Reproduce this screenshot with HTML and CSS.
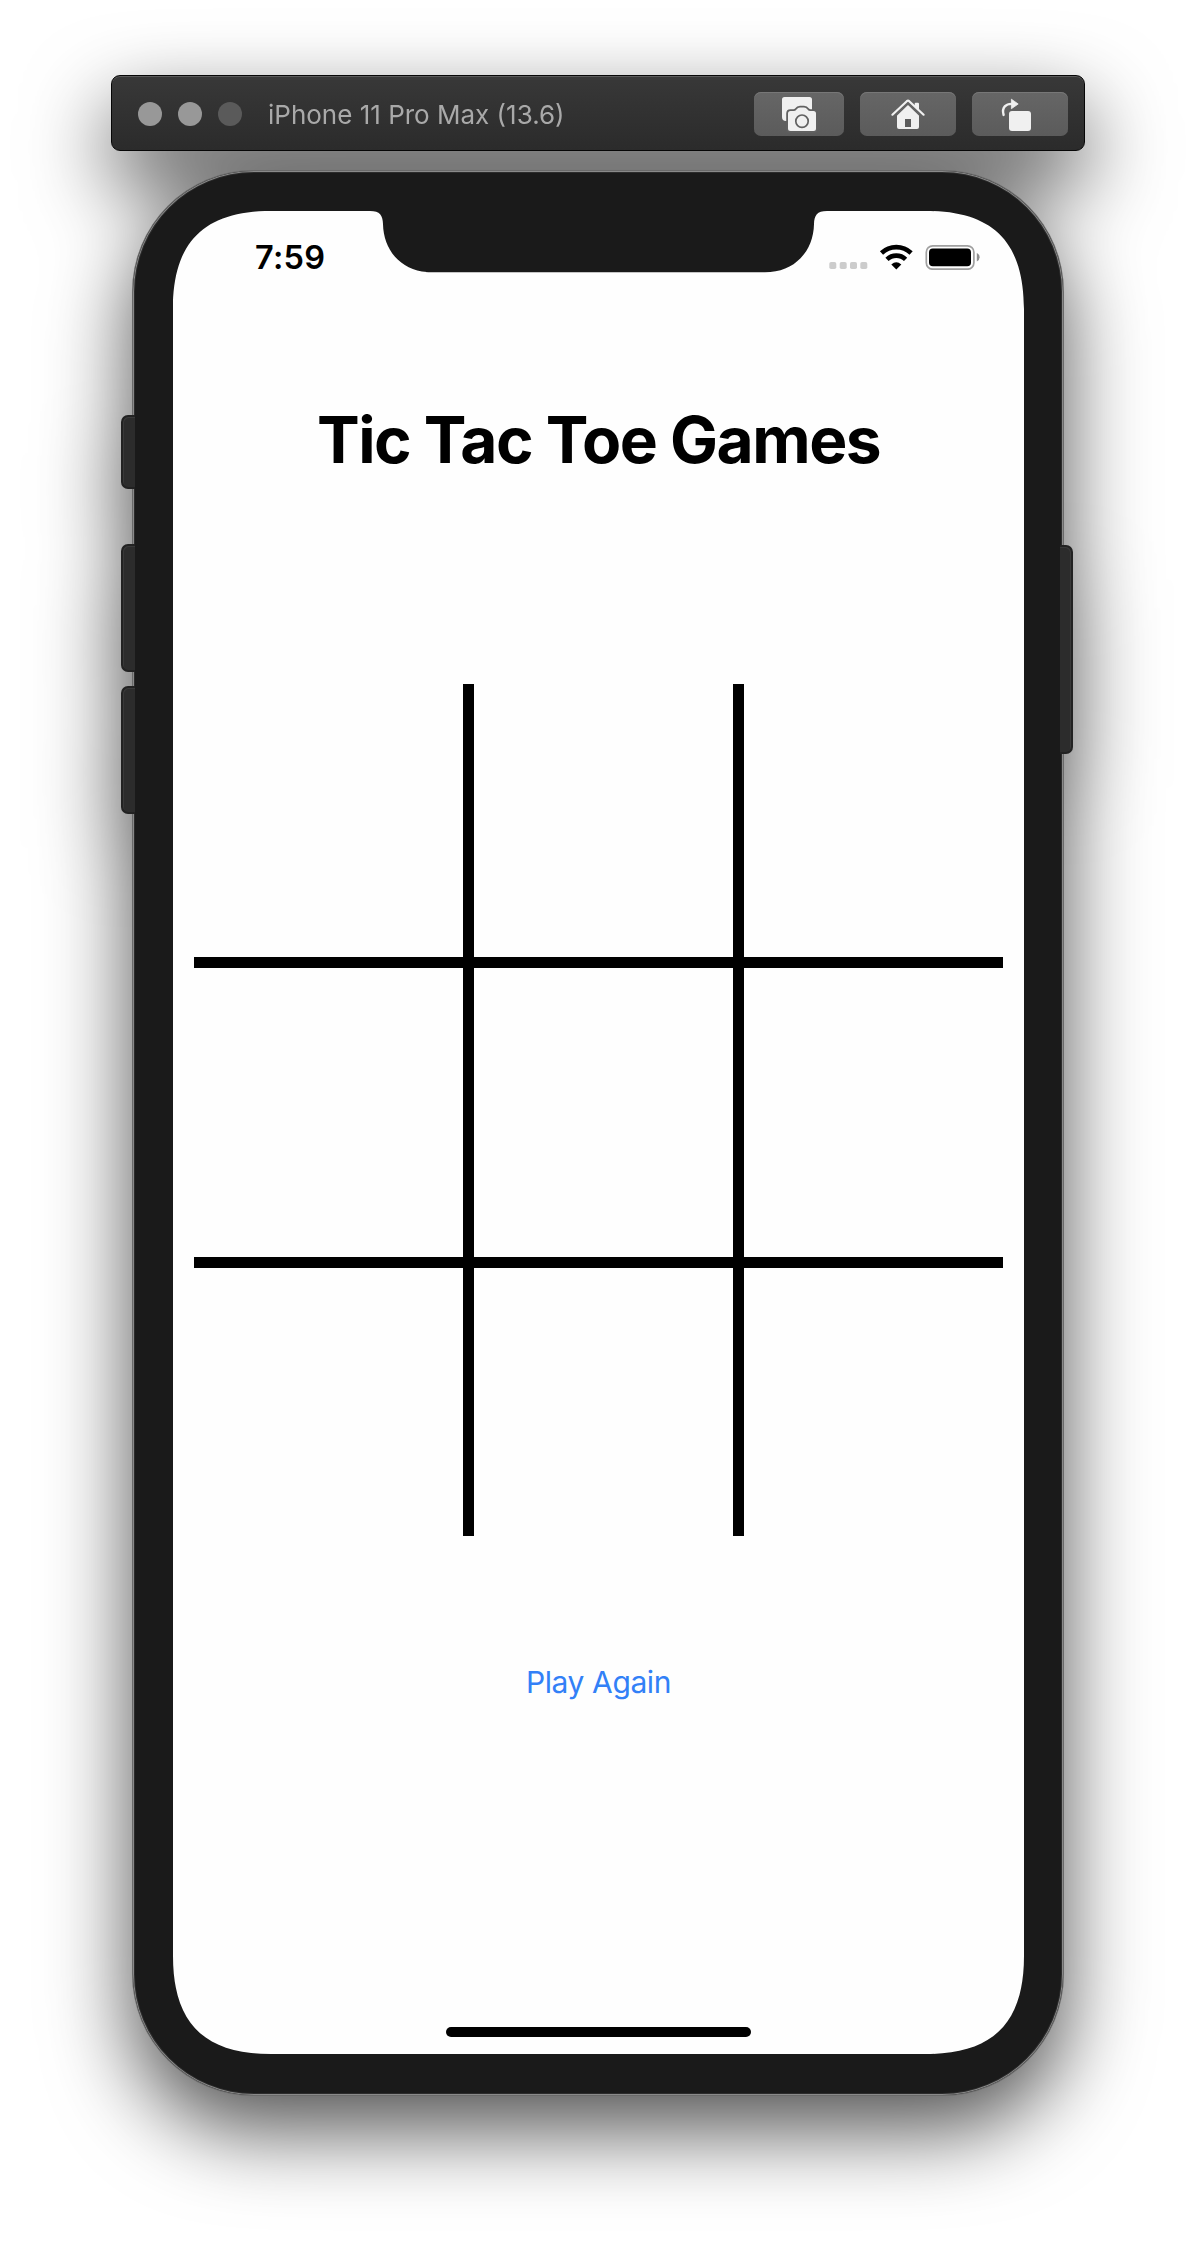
FILE: index.html
```html
<!DOCTYPE html>
<html lang="en">
<head>
<meta charset="utf-8">
<title>Tic Tac Toe Games</title>
<link rel="stylesheet" href="styles.css">
</head>
<body>
<div class="simulator">
  <header class="titlebar">
    <div class="lights"><i class="light"></i><i class="light"></i><i class="light light-off"></i></div>
    <span class="device-name">iPhone 11 Pro Max (13.6)</span>
    <div class="tools">
      <button class="tool tool-camera" aria-label="Screenshot">
        <svg width="90" height="44" viewBox="754 92 90 44">
          <path fill="#f0f0f0" d="M784.500 97H809.500Q812 97 812 99.500V113H790V121H786Q782 121 782 117V99.500Q782 97 784.500 97Z"/>
          <path fill="#f0f0f0" stroke="#616161" stroke-width="3.600" paint-order="stroke" d="M790.500 111H793.500Q795.500 111 796.500 109.500Q797.800 107.500 800 107.500H804Q806.200 107.500 807.500 109.500Q808.500 111 810.500 111H813.500Q816 111 816 113.500V128.500Q816 131 813.500 131H790.500Q788 131 788 128.500V113.500Q788 111 790.500 111Z"/>
          <circle cx="802" cy="121.200" r="6.200" fill="none" stroke="#616161" stroke-width="1.700"/>
        </svg>
      </button>
      <button class="tool" aria-label="Home">
        <svg width="96" height="44" viewBox="860 92 96 44">
          <path fill="#f0f0f0" d="M908 103.800L919 114.300V127Q919 129 917 129H899Q897 129 897 127V114.300Z"/>
          <path fill="#5c5c5c" d="M905 119h6v8h-6z"/>
          <path fill="#f0f0f0" d="M914.700 106v-2.200q0-1 1-1h2.300q1 0 1 1v6.200z"/>
          <path fill="none" stroke="#616161" stroke-width="1.500" d="M894 117.500L908 104L922 117.500"/>
          <path fill="none" stroke="#f0f0f0" stroke-width="2.200" stroke-linecap="round" stroke-linejoin="round" d="M892.400 114.700L906.800 101.200Q908 100.200 909.200 101.200L923.600 114.700"/>
        </svg>
      </button>
      <button class="tool" aria-label="Rotate">
        <svg width="96" height="44" viewBox="972 92 96 44">
          <rect x="1009" y="111" width="22" height="20" rx="3" fill="#f0f0f0"/>
          <path fill="none" stroke="#f0f0f0" stroke-width="2.400" stroke-linecap="round" d="M1003.600 114.900Q1002 109.500 1004.800 106.400Q1007 103.900 1011.500 103.900"/>
          <path fill="#f0f0f0" stroke="#f0f0f0" stroke-width=".8" stroke-linejoin="round" d="M1011.400 99.200L1018.200 104L1011.400 108.700Z"/>
        </svg>
      </button>
    </div>
  </header>

  <div class="phone">
    <i class="side-key key-mute"></i>
    <i class="side-key key-up"></i>
    <i class="side-key key-down"></i>
    <i class="side-key key-power"></i>
    <div class="body">
      <main class="screen">
        <div class="statusbar">
          <span class="clock">7:59</span>
          <svg class="status-icons" width="152" height="26" viewBox="829 244 152 26">
            <g fill="#ccc">
              <rect x="829.300" y="262" width="7" height="7" rx="1.800"/>
              <rect x="839.700" y="262" width="7" height="7" rx="1.800"/>
              <rect x="850" y="262" width="7" height="7" rx="1.800"/>
              <rect x="860.300" y="262" width="7" height="7" rx="1.800"/>
            </g>
            <g fill="none" stroke="#000" stroke-width="4.600">
              <path d="M881.500 253A21.500 21.500 0 0 1 911.100 253"/>
              <path d="M887 259.400A13.300 13.300 0 0 1 905.600 259.400"/>
            </g>
            <path d="M896.300 269.400L891.300 264.400Q896.300 260 901.300 264.400Z"/>
            <rect x="926.300" y="245.800" width="47.600" height="23.400" rx="6.500" fill="none" stroke="#a0a0a0" stroke-width="1.700"/>
            <rect x="929" y="248.600" width="42" height="17.600" rx="3.800"/>
            <path fill="#8f8f8f" d="M976.800 253Q979.600 254.200 979.600 257.300T976.800 261.600Z"/>
          </svg>
        </div>
        <h1 class="title">Tic Tac Toe Games</h1>
        <div class="board">
          <i></i><i></i><i></i>
          <i></i><i></i><i></i>
          <i></i><i></i><i></i>
        </div>
        <button class="again">Play Again</button>
        <div class="home-indicator"></div>
      </main>
    </div>
  </div>
</div>
</body>
</html>
```
FILE: styles.css
```css
* { box-sizing: border-box; }

body {
  margin: 0;
  width: 1196px;
  height: 2244px;
  overflow: hidden;
  background: #fff;
  font-family: Inter, "Liberation Sans", sans-serif;
}

button {
  border: 0;
  padding: 0;
  background: none;
  font: inherit;
}

.simulator {
  width: 974px;
  margin: 75px 0 0 111px;
  display: flex;
  flex-direction: column;
  gap: 20px;
  filter: drop-shadow(0 34px 42px rgba(0, 0, 0, .68));
}

.titlebar {
  height: 76px;
  padding: 0 16px 0 26px;
  display: flex;
  align-items: center;
  border: 1px solid #060606;
  border-radius: 9px;
  background: linear-gradient(#383838, #2b2b2b);
  box-shadow: inset 0 1px 0 #5a5a5a;
}

.lights { display: flex; gap: 16px; padding-top: 2px; }
.light { width: 24px; height: 24px; border-radius: 50%; background: #989898; }
.light-off { background: #5a5a5a; }

.device-name {
  margin: 2px 0 0 26px;
  font-size: 26px;
  color: #a9a9a9;
  white-space: nowrap;
}

.tools { display: flex; gap: 16px; margin-left: auto; padding-top: 2px; }

.tool {
  width: 96px;
  height: 44px;
  border-radius: 7px;
  background: linear-gradient(#666, #5b5b5b);
  box-shadow: inset 0 1px 0 #777;
}
.tool-camera { width: 90px; }
.tool svg { display: block; }

.phone {
  position: relative;
  width: 930px;
  height: 1924px;
  margin-left: 22px;
}

.body {
  position: relative;
  height: 100%;
  padding: 40px 39px 41px 40px;
  border-radius: 121px;
  background: #1a1a1a;
  box-shadow: 0 0 0 1px #6a6a6a, inset 0 0 0 1px #8a8a8a, inset 0 0 0 2px #2c2c2c;
}

.side-key {
  position: absolute;
  z-index: 1;
  left: -12px;
  width: 14px;
  border: 2px solid #222;
  border-right: 0;
  border-radius: 7px 0 0 7px;
  background: #2c2c2c;
  box-shadow: inset 1px 1px 0 #393939;
}
.key-mute { top: 244px; height: 74px; }
.key-up { top: 373px; height: 128px; }
.key-down { top: 515px; height: 128px; }
.key-power {
  left: auto;
  right: -10px;
  top: 374px;
  width: 13px;
  height: 209px;
  border: 2px solid #222;
  border-left: 0;
  border-radius: 0 7px 7px 0;
  box-shadow: inset -1px 1px 0 #393939;
}

/* Continuous-curve corners plus the notch cut-out. */
.screen {
  height: 1843px;
  display: flex;
  flex-direction: column;
  align-items: center;
  background: #fefefe;
  clip-path: path("M98 0 H197 C207 0 209.800 4.500 210 13 C210.500 40 229 61.300 259 61.300 H592 C622 61.300 640.500 40 641 13 C641.200 4.500 644 0 654 0 H753 C820 0 851 31 851 98 V1745 C851 1812 820 1843 753 1843 H98 C31 1843 0 1812 0 1745 V98 C0 31 31 0 98 0 Z");
}

.statusbar {
  align-self: stretch;
  height: 61px;
  padding: 33px 43px 0 82px;
  display: flex;
  justify-content: space-between;
  align-items: flex-start;
}
.clock {
  font-size: 32.500px;
  line-height: 28px;
  font-weight: 600;
  letter-spacing: .3px;
  color: #000;
}
.status-icons { display: block; }

.title {
  margin: 124px 0 0;
  font-size: 64px;
  line-height: 88px;
  font-weight: 700;
  letter-spacing: -1.500px;
  white-space: nowrap;
  color: #000;
}

.board {
  flex: none;
  width: 809px;
  height: 852px;
  margin: 200px 0 0;
  display: grid;
  grid-template-columns: 269px 259px 259px;
  grid-template-rows: 273px 289px 268px;
  gap: 11px;
  background: #000;
}
.board i { background: #fefefe; }

.again {
  margin-top: 128px;
  font-size: 30px;
  line-height: 36px;
  letter-spacing: -.400px;
  color: #3280f7;
  white-space: nowrap;
}

.home-indicator {
  width: 305px;
  height: 10px;
  margin: auto 0 17px;
  border-radius: 5px;
  background: #000;
}
```
